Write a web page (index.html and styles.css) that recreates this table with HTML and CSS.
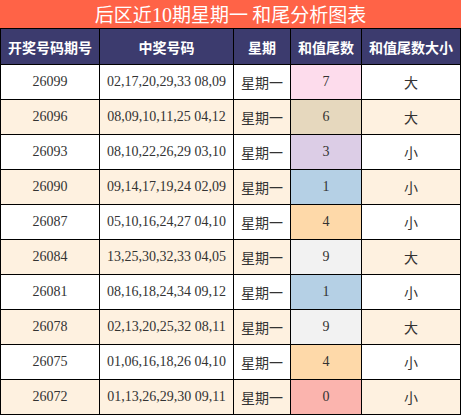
FILE: index.html
```html
<!DOCTYPE html>
<html lang="zh">
<head>
<meta charset="utf-8">
<link rel="stylesheet" href="styles.css">
</head>
<body>
<div class="chart">
  <div class="title">后区近<span class="num">10</span>期星期一 和尾分析图表</div>
  <div class="grid">
    <div class="th">开奖号码期号</div>
    <div class="th">中奖号码</div>
    <div class="th">星期</div>
    <div class="th">和值尾数</div>
    <div class="th">和值尾数大小</div>

    <div class="td num">26099</div><div class="td num">02,17,20,29,33 08,09</div><div class="td cjk">星期一</div><div class="td num c-pink">7</div><div class="td cjk">大</div>
    <div class="td alt num">26096</div><div class="td alt num">08,09,10,11,25 04,12</div><div class="td alt cjk">星期一</div><div class="td num c-beige">6</div><div class="td alt cjk">大</div>
    <div class="td num">26093</div><div class="td num">08,10,22,26,29 03,10</div><div class="td cjk">星期一</div><div class="td num c-lav">3</div><div class="td cjk">小</div>
    <div class="td alt num">26090</div><div class="td alt num">09,14,17,19,24 02,09</div><div class="td alt cjk">星期一</div><div class="td num c-blue">1</div><div class="td alt cjk">小</div>
    <div class="td num">26087</div><div class="td num">05,10,16,24,27 04,10</div><div class="td cjk">星期一</div><div class="td num c-peach">4</div><div class="td cjk">小</div>
    <div class="td alt num">26084</div><div class="td alt num">13,25,30,32,33 04,05</div><div class="td alt cjk">星期一</div><div class="td num c-gray">9</div><div class="td alt cjk">大</div>
    <div class="td num">26081</div><div class="td num">08,16,18,24,34 09,12</div><div class="td cjk">星期一</div><div class="td num c-blue">1</div><div class="td cjk">小</div>
    <div class="td alt num">26078</div><div class="td alt num">02,13,20,25,32 08,11</div><div class="td alt cjk">星期一</div><div class="td num c-gray">9</div><div class="td alt cjk">大</div>
    <div class="td num">26075</div><div class="td num">01,06,16,18,26 04,10</div><div class="td cjk">星期一</div><div class="td num c-peach">4</div><div class="td cjk">小</div>
    <div class="td alt num">26072</div><div class="td alt num">01,13,26,29,30 09,11</div><div class="td alt cjk">星期一</div><div class="td num c-salmon">0</div><div class="td alt cjk">小</div>
  </div>
</div>
</body>
</html>
```

FILE: styles.css
```css
html, body {
  margin: 0;
  padding: 0;
  background: #ffffff;
}

.chart {
  width: 461px;
  height: 415px;
  background: #000000;
  font-family: "Noto Sans CJK SC", "Noto Sans", sans-serif;
}

.title {
  height: 28px;
  background: #ff6347;
  color: #ffffff;
  font-size: 19px;
  line-height: 28px;
  text-align: center;
  font-family: "Noto Sans CJK SC", sans-serif;
}

.title .num {
  font-family: "Liberation Serif", serif;
  font-size: 20px;
}

.grid {
  display: grid;
  grid-template-columns: 98px 133px 56px 70px 98px;
  grid-template-rows: 35px repeat(10, 34px);
  gap: 1px;
  padding: 1px;
}

.th {
  background: #3c3b6e;
  color: #ffffff;
  font-weight: bold;
  font-size: 14px;
  display: flex;
  align-items: center;
  justify-content: center;
  white-space: nowrap;
}

.td {
  background: #ffffff;
  color: #333333;
  display: flex;
  align-items: center;
  justify-content: center;
  white-space: nowrap;
  font-size: 14px;
}

.td.alt {
  background: #fef1e0;
}

.num {
  font-family: "Liberation Serif", serif;
  font-size: 14px;
}

.cjk {
  font-family: "Noto Sans CJK SC", sans-serif;
  font-size: 14px;
}

.c-pink { background: #fddcec; }
.c-beige { background: #e6d8be; }
.c-lav { background: #dccde6; }
.c-blue { background: #b5d0e5; }
.c-peach { background: #fed9a9; }
.c-gray { background: #f2f2f2; }
.c-salmon { background: #fbb4ae; }
```
